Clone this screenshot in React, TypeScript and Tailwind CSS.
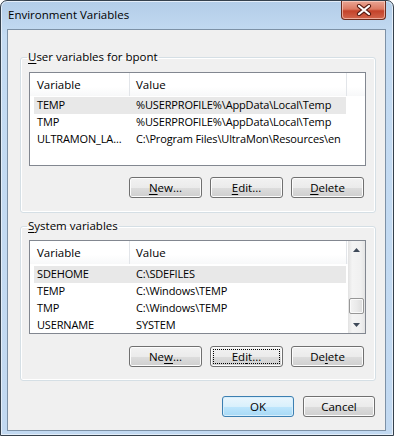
import clsx from "clsx";
import type { ReactNode } from "react";

type EnvVar = { name: string; value: string; selected?: boolean };

const USER_VARS: EnvVar[] = [
  { name: "TEMP", value: "%USERPROFILE%\\AppData\\Local\\Temp", selected: true },
  { name: "TMP", value: "%USERPROFILE%\\AppData\\Local\\Temp" },
  { name: "ULTRAMON_LA...", value: "C:\\Program Files\\UltraMon\\Resources\\en" },
];

const SYSTEM_VARS: EnvVar[] = [
  { name: "SDEHOME", value: "C:\\SDEFILES", selected: true },
  { name: "TEMP", value: "C:\\Windows\\TEMP" },
  { name: "TMP", value: "C:\\Windows\\TEMP" },
  { name: "USERNAME", value: "SYSTEM" },
];

// label with one underlined access key, e.g. "&New..."
function Mnemonic({ text }: { text: string }) {
  const i = text.indexOf("&");
  if (i < 0) return <>{text}</>;
  return (
    <>
      {text.slice(0, i)}
      <span className="underline decoration-1 underline-offset-[2px]">{text[i + 1]}</span>
      {text.slice(i + 2)}
    </>
  );
}

function Button({
  label,
  width = "w-[73px]",
  primary,
  focused,
}: {
  label: string;
  width?: string;
  primary?: boolean;
  focused?: boolean;
}) {
  return (
    <button
      className={clsx(
        "h-[21px] rounded-[3px] border text-[11.5px] leading-none text-black",
        width,
        primary
          ? "border-[#3c7fb1] bg-[linear-gradient(to_bottom,#eaf6fd_0%,#d9f0fc_50%,#bee6fd_50%,#a7d9f5_100%)] shadow-[inset_0_0_0_1px_#d8eefb]"
          : "border-[#707070] bg-[linear-gradient(to_bottom,#f2f2f2_0%,#ebebeb_50%,#dddddd_50%,#cfcfcf_100%)] shadow-[inset_0_0_0_1px_#fcfcfc]",
        focused && "outline-1 outline-dotted outline-black outline-offset-[-4px]"
      )}
    >
      <Mnemonic text={label} />
    </button>
  );
}

function ListHeader() {
  return (
    <div className="flex h-[23px] shrink-0 items-center bg-[linear-gradient(to_bottom,#ffffff_0%,#ffffff_60%,#f7f8f9_100%)] text-[11.5px] text-black">
      <div className="flex h-full w-[100px] items-center border-r border-[#e2e5e9] pl-[7px]">Variable</div>
      <div className="flex h-full w-[217px] items-center border-r border-[#e2e5e9] pl-[6px]">Value</div>
    </div>
  );
}

function Rows({ items, top }: { items: EnvVar[]; top: string }) {
  return (
    <div className={clsx("flex flex-col", top)}>
      {items.map((item) => (
        <div
          key={item.name}
          className={clsx(
            "ml-[4px] grid h-[17px] w-[312px] grid-cols-[96px_1fr] items-center whitespace-nowrap text-[11px] tracking-[-0.15px] text-black",
            item.selected && "bg-[#e8e8e8]"
          )}
        >
          <span className="overflow-hidden pl-[3px]">{item.name}</span>
          <span className="overflow-hidden pl-[6px]">{item.value}</span>
        </div>
      ))}
    </div>
  );
}

function Arrow({ down }: { down?: boolean }) {
  return (
    <svg width="7" height="4" viewBox="0 0 7 4">
      <polygon points={down ? "0,0 7,0 3.5,4" : "3.5,0 7,4 0,4"} fill="#3f4a59" />
    </svg>
  );
}

function ScrollBar() {
  return (
    <div className="flex w-[17px] flex-col bg-[linear-gradient(to_right,#e2e2e2_0%,#f4f4f4_25%,#f0f0f0_75%,#e4e4e4_100%)]">
      <div className="flex h-[17px] items-center justify-center">
        <Arrow />
      </div>
      <div className="flex-1">
        <div className="mx-auto mt-[40px] h-[16px] w-[15px] rounded-[2px] border border-[#979797] bg-[linear-gradient(to_right,#f3f3f3_0%,#eaeaea_50%,#dcdcdc_100%)] shadow-[inset_0_0_0_1px_#fafafa]" />
      </div>
      <div className="flex h-[17px] items-center justify-center">
        <Arrow down />
      </div>
    </div>
  );
}

function GroupBox({ label, className, children }: { label: string; className?: string; children: ReactNode }) {
  return (
    <fieldset
      className={clsx(
        "ml-[12px] w-[356px] rounded-[3px] border border-[#d5dfe5] pl-[8px] pr-[9px] shadow-[inset_0_0_0_1px_#ffffff]",
        className
      )}
    >
      <legend className="ml-[-2px] px-[1px] text-[11.5px] leading-[16px] text-black">
        <Mnemonic text={label} />
      </legend>
      {children}
    </fieldset>
  );
}

export default function App() {
  return (
    <div className="flex h-[436px] w-[394px] flex-col overflow-hidden rounded-t-[7px] border border-[#35414d] bg-[linear-gradient(to_bottom,#b3cde8_0%,#c4dbf2_8%,#c2d9f1_100%)] font-['Open_Sans','Noto_Sans',sans-serif] shadow-[inset_0_0_0_1px_#e4eef9]">
      {/* title bar */}
      <div className="flex h-[28px] shrink-0 items-start">
        <div className="flex h-full flex-1 items-center pl-[7px] text-[11.5px] text-black">Environment Variables</div>
        <button className="mr-[7px] flex h-[19px] w-[45px] items-center justify-center rounded-b-[4px] border border-t-0 border-[#6b2b1d] bg-[linear-gradient(to_bottom,#e9a594_0%,#dc7a63_45%,#c4422a_55%,#d2664d_100%)] shadow-[inset_0_0_0_1px_rgba(255,220,210,0.6)]">
          <svg width="16" height="12" viewBox="0 0 16 12">
            <path d="M3 2 L13 10 M13 2 L3 10" stroke="#5a1d14" strokeWidth="4.2" strokeLinecap="round" />
            <path d="M3 2 L13 10 M13 2 L3 10" stroke="#ffffff" strokeWidth="2.2" strokeLinecap="round" />
          </svg>
        </button>
      </div>

      {/* client area */}
      <div className="mb-[4px] ml-[6px] mr-[7px] flex flex-1 flex-col border border-[#7d91a6] bg-[#f0f0f0]">
        <GroupBox label="&User variables for bpont" className="mt-[19px] pb-[14px]">
          <div className="mt-[7px] flex h-[94px] w-[337px] flex-col border border-[#828790] bg-white">
            <ListHeader />
            <Rows items={USER_VARS} top="pt-[1px]" />
          </div>
          <div className="mt-[11px] flex justify-end gap-[8px] pr-[2px]">
            <Button label="&New..." />
            <Button label="&Edit..." />
            <Button label="&Delete" />
          </div>
        </GroupBox>

        <GroupBox label="&System variables" className="mt-[5px] pb-[13px]">
          <div className="mt-[6px] flex h-[94px] w-[337px] border border-[#828790] bg-white">
            <div className="flex flex-1 flex-col overflow-hidden">
              <ListHeader />
              <Rows items={SYSTEM_VARS} top="pt-[2px]" />
            </div>
            <ScrollBar />
          </div>
          <div className="mt-[12px] flex justify-end gap-[8px] pr-[2px]">
            <Button label="Ne&w..." />
            <Button label="Ed&it..." focused />
            <Button label="De&lete" />
          </div>
        </GroupBox>

        <div className="mt-[15px] flex justify-end gap-[9px] pr-[10px]">
          <Button label="OK" width="w-[72px]" primary />
          <Button label="Cancel" width="w-[72px]" />
        </div>
      </div>
    </div>
  );
}
